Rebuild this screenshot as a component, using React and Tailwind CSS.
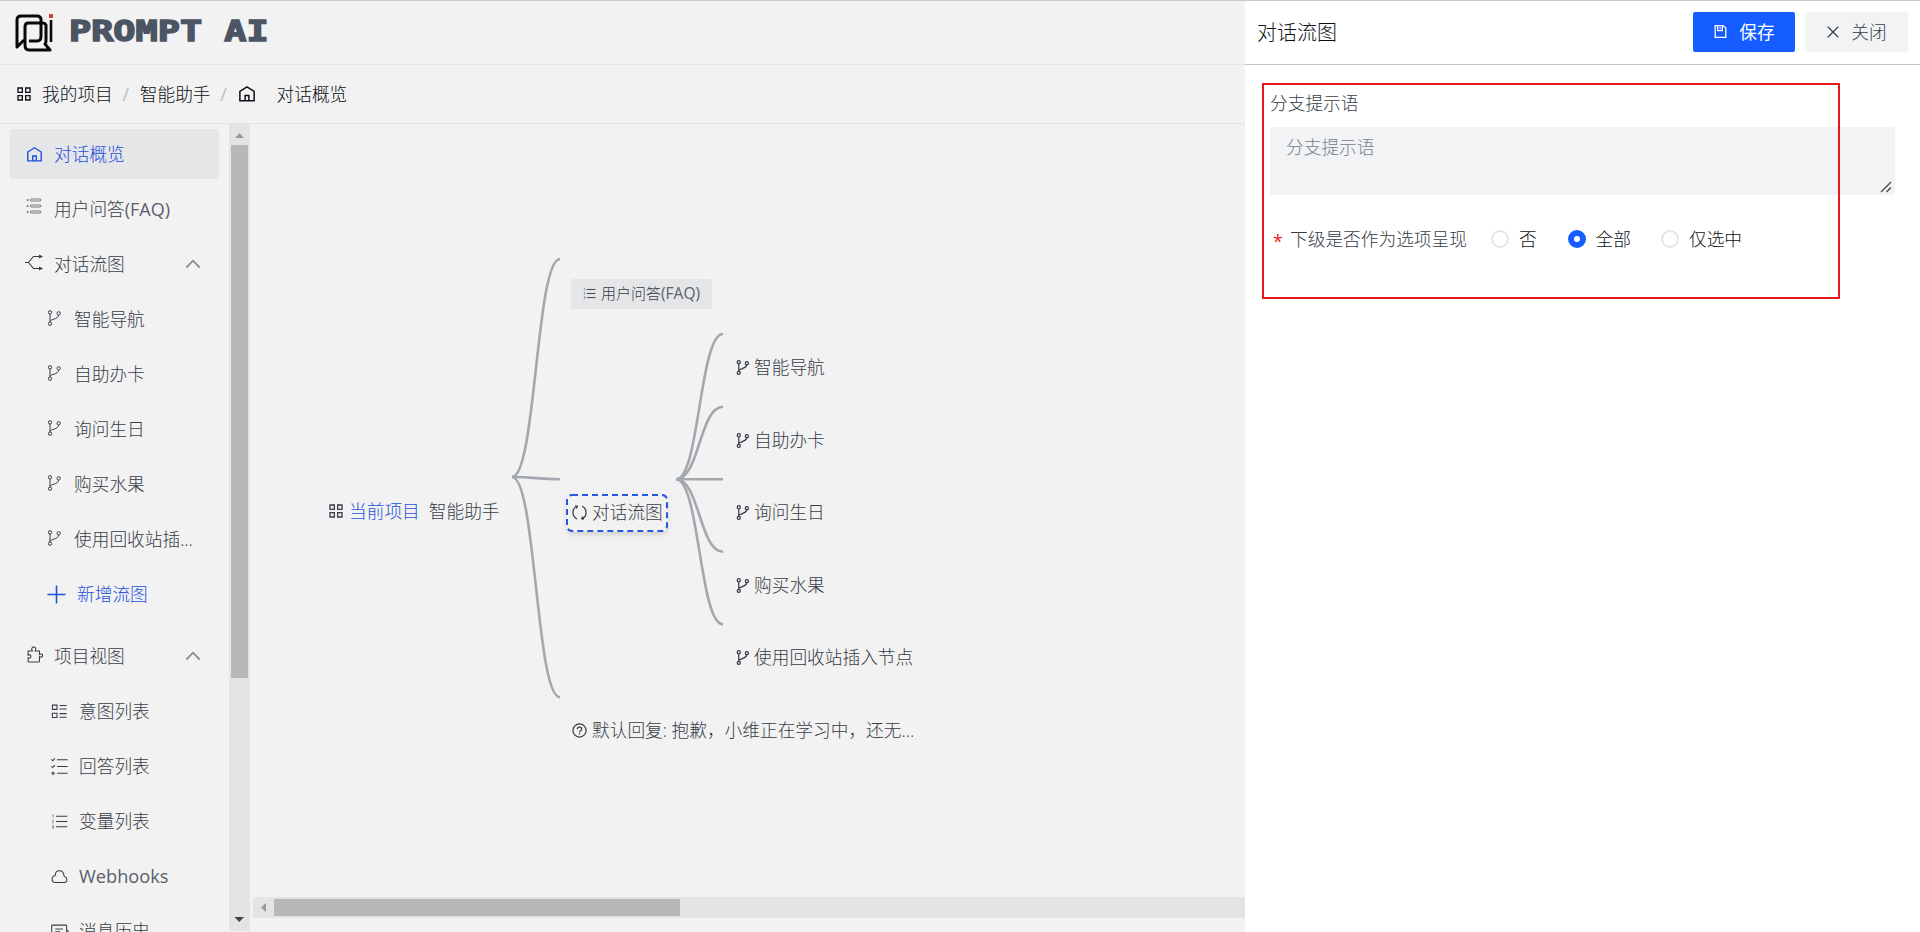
import React from 'react';

const PATHS = {
  apps: 'M6 6h13v13H6zM29 6h13v13H29zM6 29h13v13H6zM29 29h13v13H29z',
  home: 'M5 17 24 5l19 12v25H5V17ZM19 42V28h10v14',
  faq: 'M16 3h26a3 3 0 0 1 0 6H16a3 3 0 0 1 0-6ZM16 21h26a3 3 0 0 1 0 6H16a3 3 0 0 1 0-6ZM16 39h26a3 3 0 0 1 0 6H16a3 3 0 0 1 0-6ZM3 6a2 2 0 1 0 4 0a2 2 0 1 0-4 0M3 24a2 2 0 1 0 4 0a2 2 0 1 0-4 0M3 42a2 2 0 1 0 4 0a2 2 0 1 0-4 0',
  branch: 'M17 7a5 5 0 1 1-10 0 5 5 0 0 1 10 0ZM43 10a5 5 0 1 1-10 0 5 5 0 0 1 10 0ZM17 41a5 5 0 1 1-10 0 5 5 0 0 1 10 0ZM12 12v24M12 34c2-7 24-5 26-19',
  ordered: 'M14 9h32M14 24h32M14 39h32',
  digits: 'M3 7l3-2v8M3 20h4v3l-4 5h4M3 35h4v8H3m0-4h4',
  intents: 'M4 6h13v12H4zM4 29h13v12H4zM24 7h20M24 17h20M24 30h20M24 40h20',
  answers: 'M17 5h30M17 24h30M17 43h30M1 4l4 4 6-7M1 23l4 4 6-7M3 43a3 3 0 1 0 6 0a3 3 0 1 0-6 0',
  cloud: 'M3 32c0 6 4 9 10 9h22c6 0 10-3 10-8s-4-8-8-10C36 13 31 8 24 8s-12 5-12 13c-5 1-9 5-9 11Z',
  messages: 'M4 6h38a2 2 0 0 1 2 2v32H4a2 2 0 0 1-2-2V8a2 2 0 0 1 2-2ZM12 17h22M12 25h14M44 22h4v18h-4',
  puzzle: 'M6 14h12c-4-6-1-11 4-11s8 5 4 11h12v10c5-3 9-1 9 3s-4 6-9 3v13q0 2-2 2H8q-2 0-2-2V33c5 2 8 0 8-4s-3-6-8-3Z',
  plus: 'M24 1v46M1 24h46',
  save: 'M7 5h25l9 8v30H7zM15 5v16h15V5M23 10v6',
  close: 'M6 6l36 36M42 6 6 42',
  help: 'M45 24a21 21 0 1 1-42 0 21 21 0 0 1 42 0ZM17 20c0-9 14-9 14 0 0 5-7 5-7 10M24 33v4',
  loop: 'M16 45C7 40 3 32 3 24S8 7 16 4M10 3l7 1-3 7M32 3c9 5 13 13 13 21s-5 17-13 20M38 45l-7-1 3-7',
  up: 'M4 35 24 14l20 21',
};

function Icon({ name, className = 'size-4', w = 3.5 }) {
  return (
    <svg viewBox="0 0 48 48" className={`shrink-0 overflow-visible ${className}`} fill="none" stroke="currentColor" strokeWidth={w}>
      <path d={PATHS[name]} />
      {name === 'ordered' && <path d={PATHS.digits} strokeWidth="2" opacity="0.7" />}
    </svg>
  );
}

function FlowIcon() {
  return (
    <svg viewBox="0 0 18 17" className="h-[17px] w-[18px] shrink-0" fill="none" stroke="currentColor" strokeWidth="1.1">
      <path d="M0 8.500h3.500L8.500 2.500H14M3.500 8.500l5 6H14" />
      <path d="M14 .5l4 2-4 2zM14 12.500l4 2-4 2z" fill="currentColor" stroke="none" />
    </svg>
  );
}

function Logo() {
  return (
    <svg viewBox="0 0 38 38" className="h-[38px] w-[38px] shrink-0" fill="none" stroke="#080808" strokeWidth="3" strokeLinejoin="round">
      <path d="M9 26 2 33V6q0-4 4-4h16q4 0 4 4v16q0 5-4 5H14" />
      <path d="M31 11q-1-2-3-2H13q-3 0-3 4v18q0 5 4 5h21l-5-6q1-1 1-3Z" />
      <path d="M36 6v22" strokeWidth="2.600" />
      <path d="M34 0h4v4h-4z" fill="#d33f3f" stroke="none" />
    </svg>
  );
}

const flows = ['智能导航', '自助办卡', '询问生日', '购买水果', '使用回收站插...'];
const views = [
  ['intents', '意图列表'],
  ['answers', '回答列表'],
  ['ordered', '变量列表'],
  ['cloud', 'Webhooks'],
  ['messages', '消息历史'],
];

function Sidebar() {
  return (
    <div className="flex h-full w-[250px] shrink-0 overflow-hidden">
      <nav className="flex w-[229px] flex-col gap-[5px] pt-[5px] pr-2.5 pl-2.5">
        <div className="flex h-[50px] shrink-0 items-center rounded-[3px] bg-[#e5e6e8] pl-4 text-[#1f50dc]">
          <Icon name="home" className="mr-[11px] size-[17px]" w={4} />对话概览
        </div>
        <div className="flex h-[50px] shrink-0 items-center pl-4">
          <Icon name="faq" className="mr-3 mb-1.5 size-4" w={2} />用户问答<span className="text-[18px] font-normal text-[#5a616c]">(FAQ)</span>
        </div>
        <div className="flex h-[50px] shrink-0 items-center pl-[15px]">
          <span className="mb-1"><FlowIcon /></span><span className="ml-[11px] grow">对话流图</span>
          <Icon name="up" className="mr-[18px] size-4 text-[#86898e]" w={5} />
        </div>
        {flows.map((f) => (
          <div key={f} className="flex h-[50px] shrink-0 items-center pl-9">
            <Icon name="branch" className="mr-3 mb-0.5 size-4" w={3} />{f}
          </div>
        ))}
        <div className="flex h-[50px] shrink-0 items-center pl-[37px] text-[#1f50dc]">
          <Icon name="plus" className="mr-[11px] size-[19px]" w={4} />新增流图
        </div>
        <div className="mt-[7px] flex h-[50px] shrink-0 items-center pl-4">
          <Icon name="puzzle" className="mr-[11px] mb-1 size-[17px]" w={3} /><span className="grow">项目视图</span>
          <Icon name="up" className="mr-[18px] size-4 text-[#86898e]" w={5} />
        </div>
        {views.map(([icon, label]) => (
          <div key={label} className="flex h-[50px] shrink-0 items-center pl-[41px]">
            <Icon name={icon} className="mr-[11px] size-[17px]" w={3} />
            <span className={label === 'Webhooks' ? 'text-[18.2px] font-normal text-[#5a616c]' : ''}>{label}</span>
          </div>
        ))}
      </nav>
      <div className="flex h-[807px] w-[21px] flex-col items-center bg-[#e4e4e4]">
        <svg viewBox="0 0 21 21" className="h-[21px] w-[21px] shrink-0"><path d="M6 14h9l-4.500-5z" fill="#999" /></svg>
        <div className="h-[533px] w-[17px] shrink-0 bg-[#b7b7b7]" />
        <div className="grow" />
        <svg viewBox="0 0 21 21" className="h-[21px] w-[21px] shrink-0"><path d="M5.500 7h9.500l-4.750 5z" fill="#444" /></svg>
      </div>
    </div>
  );
}

const EDGES = [
  'M262 353C286 353 286 135 310 135',
  'M262 353C286 353 286 355.300 310 355.300',
  'M262 353C286 353 286 573.300 310 573.300',
  'M426 355.300C449.500 355.300 449.500 210 473 210',
  'M426 355.300C449.500 355.300 449.500 282.700 473 282.700',
  'M426 355.300H473',
  'M426 355.300C449.500 355.300 449.500 427.700 473 427.700',
  'M426 355.300C449.500 355.300 449.500 500.300 473 500.300',
];

const LEAVES = [
  ['智能导航', 'top-[230px]'],
  ['自助办卡', 'top-[303px]'],
  ['询问生日', 'top-[375px]'],
  ['购买水果', 'top-[448px]'],
  ['使用回收站插入节点', 'top-[520px]'],
];

function Canvas() {
  return (
    <div className="relative h-full grow overflow-hidden">
      <svg className="absolute inset-0 h-full w-full" fill="none" stroke="#a3a7ae" strokeWidth="2.600">
        {EDGES.map((d) => <path key={d} d={d} />)}
      </svg>
      <div className="absolute top-[374px] left-[78px] flex h-[26px] items-center">
        <Icon name="apps" className="mr-[5px] size-4" w={4} />
        <span className="text-[#1f50dc]">当前项目</span>
        <span className="ml-[9px]">智能助手</span>
      </div>
      <div className="absolute top-[155px] left-[321px] flex h-[30px] w-[141px] items-center rounded-[2px] bg-[#e5e6e8] pb-0.5 pl-3 text-[15px]">
        <Icon name="ordered" className="mr-[5px] size-[13px]" />用户问答<span className="text-[15.5px] font-normal text-[#5a616c]">(FAQ)</span>
      </div>
      <div className="absolute top-[370px] left-[316px] h-[38px] w-[102px] rounded-md shadow-md">
        <svg className="absolute inset-0 h-full w-full"><rect x="1" y="1" width="100" height="36" rx="5" fill="#f2f2f2" stroke="#2458e0" strokeWidth="2" strokeDasharray="6 4" /></svg>
        <div className="relative flex h-full items-center pb-0.5 pl-1.5">
          <Icon name="loop" className="mr-[5px] size-[15px]" w={4} />对话流图
        </div>
      </div>
      {LEAVES.map(([label, top]) => (
        <div key={label} className={`absolute left-[485px] flex h-[26px] items-center ${top}`}>
          <Icon name="branch" className="mr-1 size-[15px]" w={4} /><span>{label}</span>
        </div>
      ))}
      <div className="absolute top-[593px] left-[322px] flex h-[26px] items-center whitespace-nowrap">
        <Icon name="help" className="mr-[5px] size-[15px]" w={4} />默认回复: 抱歉，小维正在学习中，还无...
      </div>
      <div className="absolute top-[773px] right-0 left-[3px] flex h-[21px] items-center bg-[#e4e4e4]">
        <svg viewBox="0 0 21 21" className="h-[21px] w-[21px] shrink-0"><path d="M13 6v9l-5-4.500z" fill="#999" /></svg>
        <div className="h-[17px] w-[406px] bg-[#b7b7b7]" />
      </div>
    </div>
  );
}

function Radio({ checked, label, className }) {
  return (
    <label className={`flex items-center text-[#0c1016] ${className}`}>
      <span className={checked ? 'mr-2.5 size-[18px] rounded-full border-[6px] border-[#165dff] bg-white' : 'mr-2.5 size-[18px] rounded-full border-2 border-[#e5e6eb] bg-white'} />
      {label}
    </label>
  );
}

function Drawer() {
  return (
    <aside className="flex w-[675px] shrink-0 flex-col bg-white">
      <div className="flex h-16 shrink-0 items-center border-b border-[#c6c6c9] pr-3 pb-0.5 pl-3">
        <h2 className="grow pt-0.5 text-[20px] text-[#0c1016]">对话流图</h2>
        <button className="mr-2.5 flex h-10 w-[102px] items-center justify-center gap-[11px] rounded-[2px] bg-[#165dff] font-normal text-white">
          <Icon name="save" className="size-[15px]" w={4} />保存
        </button>
        <button className="flex h-10 w-[103px] items-center justify-center gap-[11px] rounded-[2px] bg-[#f2f3f5]">
          <Icon name="close" className="size-[14px]" w={4} />关闭
        </button>
      </div>
      <div className="relative flex flex-col pt-[25px] pr-[25px] pl-[25px]">
        <div className="h-[26px] leading-[26px]">分支提示语</div>
        <div className="relative mt-[11px]">
          <textarea placeholder="分支提示语" className="block h-[68px] w-full resize-none rounded-[2px] bg-[#f2f3f5] px-4 py-[7px] leading-[26px] placeholder-[#76808e]" />
          <svg viewBox="0 0 12 12" className="absolute right-[3px] bottom-[2px] size-3" fill="none" stroke="#444" strokeWidth="1.3"><path d="M1 11 11 1M6.500 11 11 6.500" /></svg>
        </div>
        <div className="mt-[31px] flex h-[26px] items-center pl-[3px]">
          <span className="mr-2 w-[9px] pt-1 font-normal text-[#f02020]">*</span>
          <span>下级是否作为选项呈现</span>
          <Radio label="否" className="ml-[24px]" />
          <Radio checked label="全部" className="ml-[31px]" />
          <Radio label="仅选中" className="ml-[30px]" />
        </div>
        <div className="pointer-events-none absolute top-[18px] left-[17px] h-[216px] w-[578px] border-2 border-[#e5191d]" />
      </div>
    </aside>
  );
}

export default function App() {
  return (
    <div className="flex h-[932px] w-[1920px] overflow-hidden border-t border-[#c8c8c8] bg-[#f2f2f2] font-['Open_Sans','Noto_Sans_CJK_SC',sans-serif] text-[17.7px] leading-[26px] font-light text-[#363d48]">
      <div className="flex w-[1245px] shrink-0 flex-col">
        <header className="flex h-16 shrink-0 items-center border-b border-[#e3e3e5] pl-[15px]">
          <Logo />
          <h1 className="mb-1 ml-4 origin-left scale-x-[1.34] font-['DejaVu_Sans_Mono',monospace] text-[27.5px] font-bold whitespace-pre text-[#4b5563] [-webkit-text-stroke:1.4px_#4b5563]">PROMPT AI</h1>
        </header>
        <div className="flex h-[59px] shrink-0 items-center border-b border-[#e3e3e5] pb-px pl-4 text-[#0c1016]">
          <Icon name="apps" className="mr-2.5 size-4" w={4} />
          <span>我的项目</span>
          <span className="mx-[9px] w-2 text-center font-normal text-[#b8bcc4]">/</span>
          <span className="ml-px">智能助手</span>
          <span className="mx-[9px] w-2 text-center font-normal text-[#b8bcc4]">/</span>
          <Icon name="home" className="mr-[21px] ml-px size-[18px]" w={4} />
          <span>对话概览</span>
        </div>
        <div className="flex min-h-0 grow">
          <Sidebar />
          <Canvas />
        </div>
      </div>
      <Drawer />
    </div>
  );
}
